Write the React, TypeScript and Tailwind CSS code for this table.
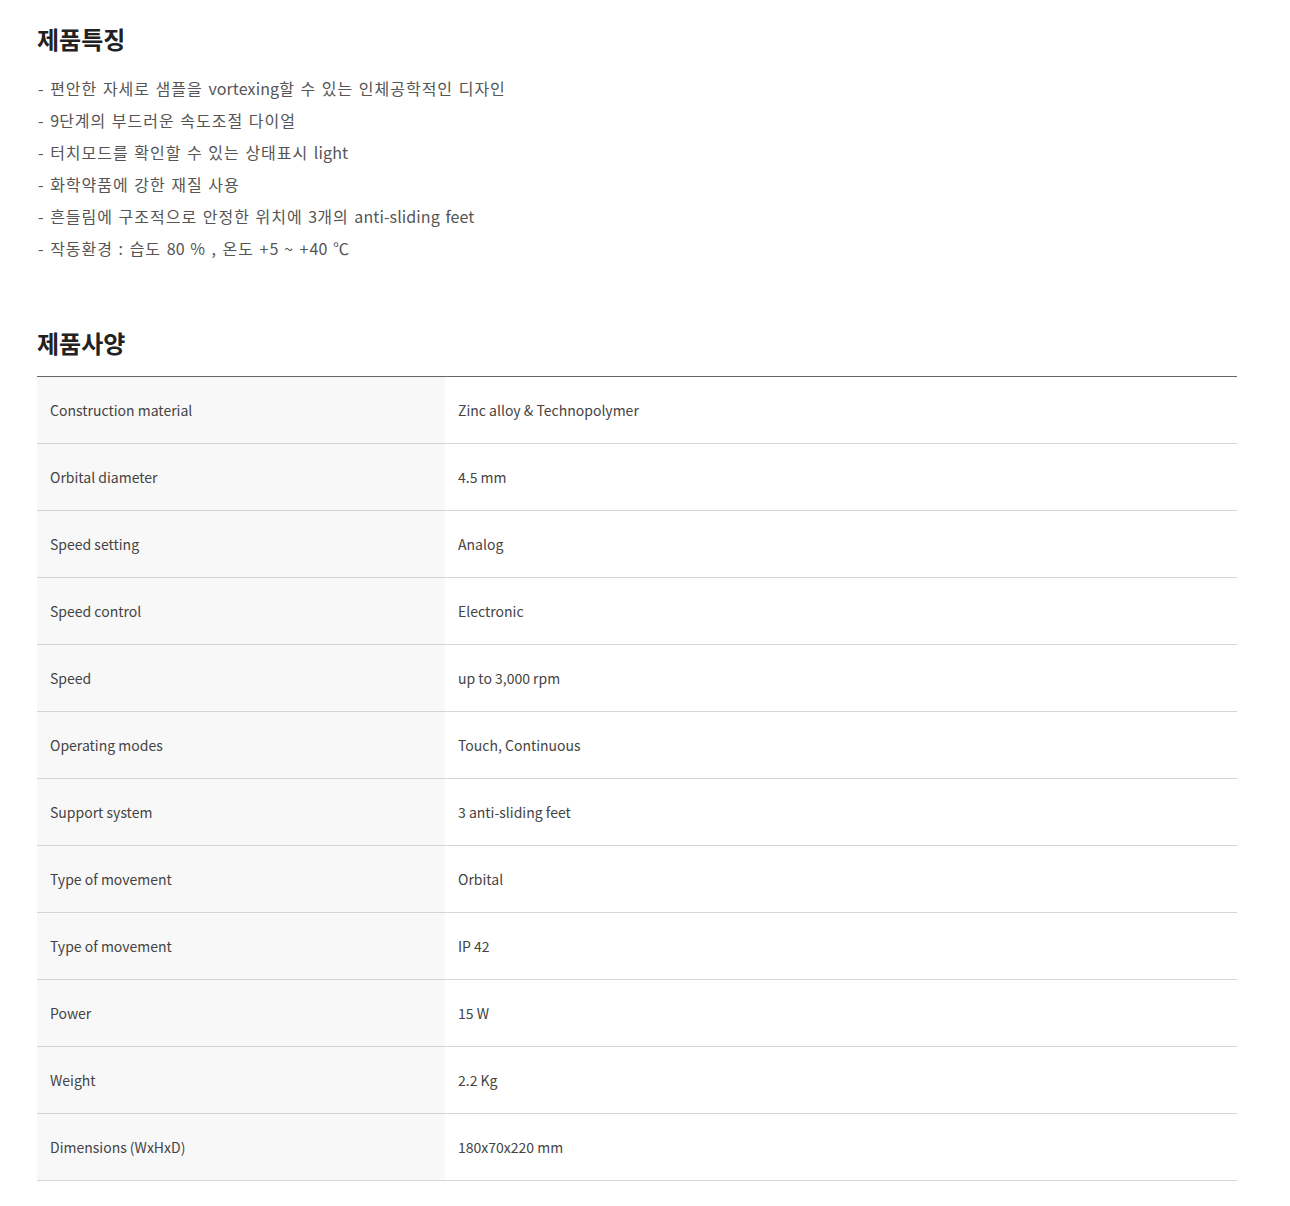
import React from "react";

const features = [
  "- 편안한 자세로 샘플을 vortexing할 수 있는 인체공학적인 디자인",
  "- 9단계의 부드러운 속도조절 다이얼",
  "- 터치모드를 확인할 수 있는 상태표시 light",
  "- 화학약품에 강한 재질 사용",
  "- 흔들림에 구조적으로 안정한 위치에 3개의 anti-sliding feet",
  "- 작동환경 : 습도 80 % , 온도 +5 ~ +40 ℃",
];

const specs: [string, string][] = [
  ["Construction material", "Zinc alloy & Technopolymer"],
  ["Orbital diameter", "4.5 mm"],
  ["Speed setting", "Analog"],
  ["Speed control", "Electronic"],
  ["Speed", "up to 3,000 rpm"],
  ["Operating modes", "Touch, Continuous"],
  ["Support system", "3 anti-sliding feet"],
  ["Type of movement", "Orbital"],
  ["Type of movement", "IP 42"],
  ["Power", "15 W"],
  ["Weight", "2.2 Kg"],
  ["Dimensions (WxHxD)", "180x70x220 mm"],
];

function Line({ text }: { text: string }) {
  const parts = text.split(/([A-Za-z0-9][A-Za-z0-9\-]*)/);
  return (
    <li>
      {parts.map((p, i) =>
        i % 2 === 1 ? (
          <span key={i} className="tracking-[0.1px]">{p}</span>
        ) : (
          <span key={i}>{p}</span>
        )
      )}
    </li>
  );
}

export default function App() {
  return (
    <div className="bg-white w-[1290px] min-h-[1206px] pl-[37px] pt-[24px]" style={{ fontFamily: '"Noto Sans CJK KR", "Noto Sans", sans-serif' }}>
      <div className="w-[1200px]">
        <h2 className="text-[24px] font-bold text-[#222] leading-[30px] m-0">제품특징</h2>
        <ul className="mt-[18px] text-[16px] text-[#555] leading-[32px] pl-[1px] tracking-[1px] [word-spacing:1px]">
          {features.map((f, i) => (
            <Line key={i} text={f} />
          ))}
        </ul>
        <h2 className="mt-[64px] text-[24px] font-bold text-[#222] leading-[30px]">제품사양</h2>
        <div className="mt-[18px] border-t border-[#666]">
          {specs.map(([k, v], i) => (
            <div key={i} className="flex h-[67px] border-b border-[#d5d5d5] text-[14px] text-[#444]">
              <div className="w-[408px] bg-[#f8f8f8] flex items-center pl-[13px]">{k}</div>
              <div className="flex-1 flex items-center pl-[13px]">{v}</div>
            </div>
          ))}
        </div>
      </div>
    </div>
  );
}
